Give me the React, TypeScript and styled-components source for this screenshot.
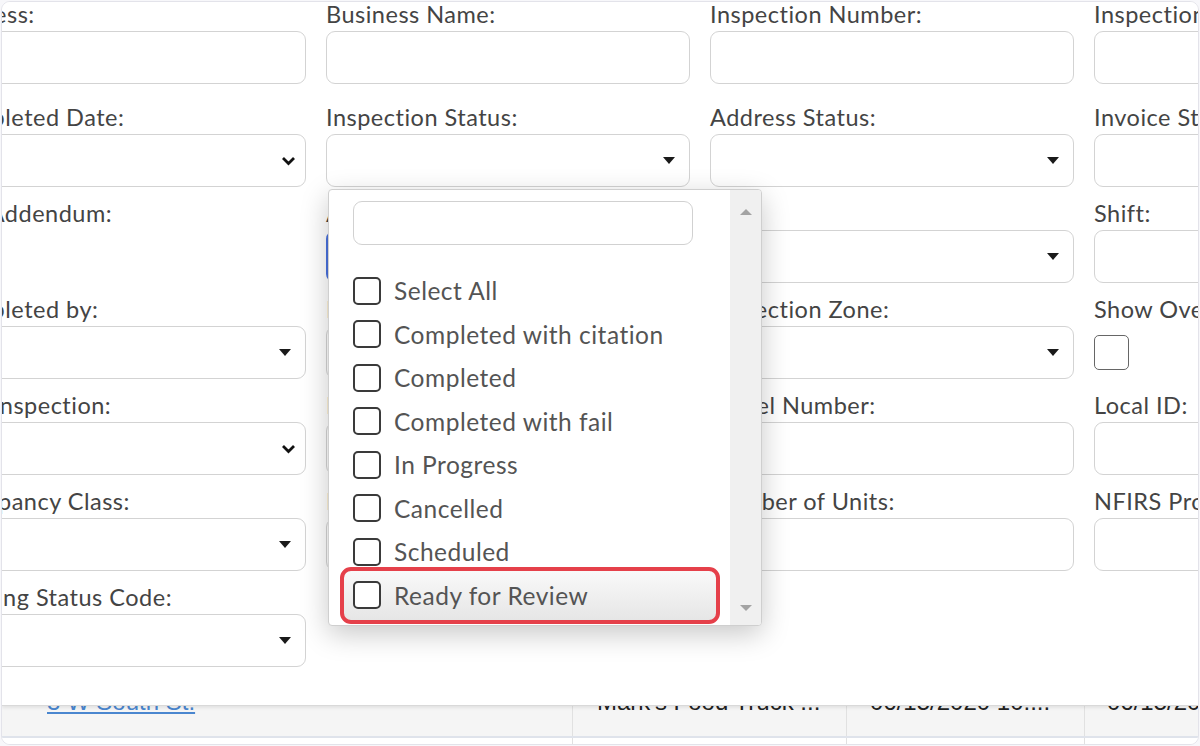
import styled, { createGlobalStyle } from 'styled-components';

type Control = 'text' | 'select' | 'native' | 'check' | 'none';

interface FieldDef {
  label: string;
  control: Control;
  open?: boolean;
  focused?: boolean;
}

// filter fields, listed row by row (4 columns)
const fields: FieldDef[] = [
  { label: 'Address:', control: 'text' },
  { label: 'Business Name:', control: 'text' },
  { label: 'Inspection Number:', control: 'text' },
  { label: 'Inspection Type:', control: 'text' },

  { label: 'Completed Date:', control: 'native' },
  { label: 'Inspection Status:', control: 'select', open: true },
  { label: 'Address Status:', control: 'select' },
  { label: 'Invoice Status:', control: 'text' },

  { label: 'Has Addendum:', control: 'none' },
  { label: 'Assigned To:', control: 'text', focused: true },
  { label: 'Unit:', control: 'select' },
  { label: 'Shift:', control: 'text' },

  { label: 'Completed by:', control: 'select' },
  { label: 'Inspector:', control: 'select' },
  { label: 'Inspection Zone:', control: 'select' },
  { label: 'Show Overdue:', control: 'check' },

  { label: 'Last Inspection:', control: 'native' },
  { label: 'District:', control: 'text' },
  { label: 'Parcel Number:', control: 'text' },
  { label: 'Local ID:', control: 'text' },

  { label: 'Occupancy Class:', control: 'select' },
  { label: 'Permit:', control: 'text' },
  { label: 'Number of Units:', control: 'text' },
  { label: 'NFIRS Property Use:', control: 'text' },

  { label: 'Building Status Code:', control: 'select' },
  { label: '', control: 'none' },
  { label: '', control: 'none' },
  { label: '', control: 'none' },
];

const statusOptions = [
  'Select All',
  'Completed with citation',
  'Completed',
  'Completed with fail',
  'In Progress',
  'Cancelled',
  'Scheduled',
  'Ready for Review',
];

const GlobalStyle = createGlobalStyle`
  html, body {
    margin: 0;
    padding: 0;
    background: #f7f7fa;
  }
  body {
    font-family: Lato, "Noto Sans", sans-serif;
  }
  * {
    box-sizing: border-box;
  }
`;

const Frame = styled.div`
  margin: 1px;
  height: 744px;
  border: 1px solid #e3e3ea;
  border-radius: 9px;
  background: #fff;
  overflow: hidden;
  display: flex;
  flex-direction: column;
`;

const FilterPanel = styled.section`
  height: 704px;
  flex-shrink: 0;
  overflow: hidden;
  position: relative;
  z-index: 1;
  background: #fff;
  border-bottom: 1px solid #d9d9d9;
  box-shadow: 0 2px 3px rgba(0, 0, 0, 0.08);
`;

const FieldGrid = styled.div`
  display: grid;
  grid-template-columns: repeat(4, 364px);
  grid-template-rows: 89px repeat(6, 82px);
  column-gap: 20px;
  row-gap: 14px;
  margin-left: -60px;
  align-items: start;
`;

const Field = styled.div`
  position: relative;
  display: flex;
  flex-direction: column;
  min-width: 0;
`;

const Label = styled.label`
  font-size: 23.5px;
  letter-spacing: 0.5px;
  line-height: 25px;
  height: 25px;
  margin-bottom: 4px;
  color: #444;
  white-space: nowrap;
`;

const Box = styled.div<{ $focused?: boolean; $padRight?: number }>`
  height: 53px;
  border: ${(p) => (p.$focused ? '2px solid #4a72de' : '1px solid #d3d3d3')};
  border-radius: 9px;
  background: #fff;
  display: flex;
  align-items: center;
  justify-content: flex-end;
  padding-right: ${(p) => p.$padRight ?? 14}px;
`;

const Caret = styled.span`
  width: 0;
  height: 0;
  border-left: 6px solid transparent;
  border-right: 6px solid transparent;
  border-top: 7px solid #1a1a1a;
`;

const Check = styled.span<{ $size: number; $soft?: boolean }>`
  display: block;
  flex-shrink: 0;
  width: ${(p) => p.$size}px;
  height: ${(p) => p.$size}px;
  border: ${(p) => (p.$soft ? '1.5px solid #666' : '2px solid #3a3a3a')};
  border-radius: 5px;
  background: #fff;
`;

const CheckSlot = styled.div`
  height: 53px;
  padding-top: 9px;
`;

const Chevron = () => (
  <svg width="15" height="10" viewBox="0 0 15 10">
    <polyline points="2,2 7.5,7.5 13,2" fill="none" stroke="#111" strokeWidth="2.8" />
  </svg>
);

/* dropdown opened under the status select */
const Dropdown = styled.div`
  position: absolute;
  top: calc(100% + 2px);
  left: 2px;
  z-index: 10;
  width: 434px;
  height: 437px;
  display: flex;
  background: #fff;
  border: 1px solid #cfcfcf;
  border-radius: 4px;
  box-shadow: 0 8px 28px rgba(0, 0, 0, 0.22);
  overflow: hidden;
`;

const DropdownBody = styled.div`
  flex: 1;
  padding: 11px 0 0 24px;
  display: flex;
  flex-direction: column;
`;

const Search = styled.div`
  width: 340px;
  height: 44px;
  border: 1px solid #d1d1d1;
  border-radius: 9px;
  margin-bottom: 24px;
`;

const Option = styled.div<{ $hover?: boolean }>`
  display: flex;
  align-items: center;
  gap: 13px;
  height: 43.5px;
  font-size: 24.5px;
  letter-spacing: 0.5px;
  color: #545454;
  white-space: nowrap;

  ${(p) =>
    p.$hover &&
    `
    height: 57px;
    width: 380px;
    margin: -7px 0 0 -13px;
    padding-left: 9px;
    border: 4px solid #e5404a;
    border-radius: 11px;
    background: linear-gradient(#f9f9f9, #e6e6e6);
  `}
`;

const ScrollTrack = styled.div`
  width: 31px;
  background: #f0f0f0;
  display: flex;
  flex-direction: column;
  align-items: center;
  justify-content: space-between;
  padding: 19px 0 14px;
`;

const ScrollArrow = styled.span<{ $down?: boolean }>`
  width: 0;
  height: 0;
  border-left: 6px solid transparent;
  border-right: 6px solid transparent;
  ${(p) => (p.$down ? 'border-top: 6px solid #a3a3a3;' : 'border-bottom: 6px solid #a3a3a3;')}
`;

const StatusDropdown = () => (
  <Dropdown>
    <DropdownBody>
      <Search />
      {statusOptions.map((o, i) => (
        <Option key={o} $hover={i === statusOptions.length - 1}>
          <Check $size={28} />
          {o}
        </Option>
      ))}
    </DropdownBody>
    <ScrollTrack>
      <ScrollArrow />
      <ScrollArrow $down />
    </ScrollTrack>
  </Dropdown>
);

const FilterField = ({ f }: { f: FieldDef }) => {
  let control = null;
  if (f.control === 'text') control = <Box $focused={f.focused} />;
  if (f.control === 'select') control = <Box $padRight={14}><Caret /></Box>;
  if (f.control === 'native') control = <Box $padRight={9}><Chevron /></Box>;
  if (f.control === 'check') control = <CheckSlot><Check $size={35} $soft /></CheckSlot>;

  return (
    <Field>
      <Label>{f.label}</Label>
      {control}
      {f.open && <StatusDropdown />}
    </Field>
  );
};

/* results table peeking under the filter panel */
const TableClip = styled.div`
  flex: 1;
  overflow: hidden;
`;

const Row = styled.div<{ $shade?: boolean }>`
  display: grid;
  grid-template-columns: 570px 274px 238px 1fr;
  height: ${(p) => (p.$shade ? '48px' : '40px')};
  margin-top: ${(p) => (p.$shade ? '-16px' : '0')};
  background: ${(p) => (p.$shade ? '#f5f5f5' : '#fff')};
  border-bottom: 2px solid #dfe3eb;
  font-family: "Liberation Sans", Arial, sans-serif;
  font-size: 24px;
  line-height: 24px;
  color: #222;
`;

const Cell = styled.div<{ $pad: number; $first?: boolean }>`
  padding: 0 0 0 ${(p) => p.$pad}px;
  border-left: ${(p) => (p.$first ? 'none' : '1px solid #e1e1e1')};
  white-space: nowrap;
  overflow: hidden;
`;

const AddressLink = styled.a`
  color: #4a86cf;
  text-decoration: underline;
  text-underline-offset: 2px;
`;

export default function App() {
  return (
    <>
      <GlobalStyle />
      <Frame>
        <FilterPanel>
          <FieldGrid>
            {fields.map((f, i) => (
              <FilterField key={i} f={f} />
            ))}
          </FieldGrid>
        </FilterPanel>
        <TableClip>
          <Row $shade>
            <Cell $pad={45} $first>
              <AddressLink>3 W South St.</AddressLink>
            </Cell>
            <Cell $pad={24}>Mark's Food Truck ...</Cell>
            <Cell $pad={23}>06/15/2020 10:...</Cell>
            <Cell $pad={22}>06/15/2020</Cell>
          </Row>
          <Row>
            <Cell $pad={45} $first />
            <Cell $pad={24} />
            <Cell $pad={23} />
            <Cell $pad={22} />
          </Row>
        </TableClip>
      </Frame>
    </>
  );
}
